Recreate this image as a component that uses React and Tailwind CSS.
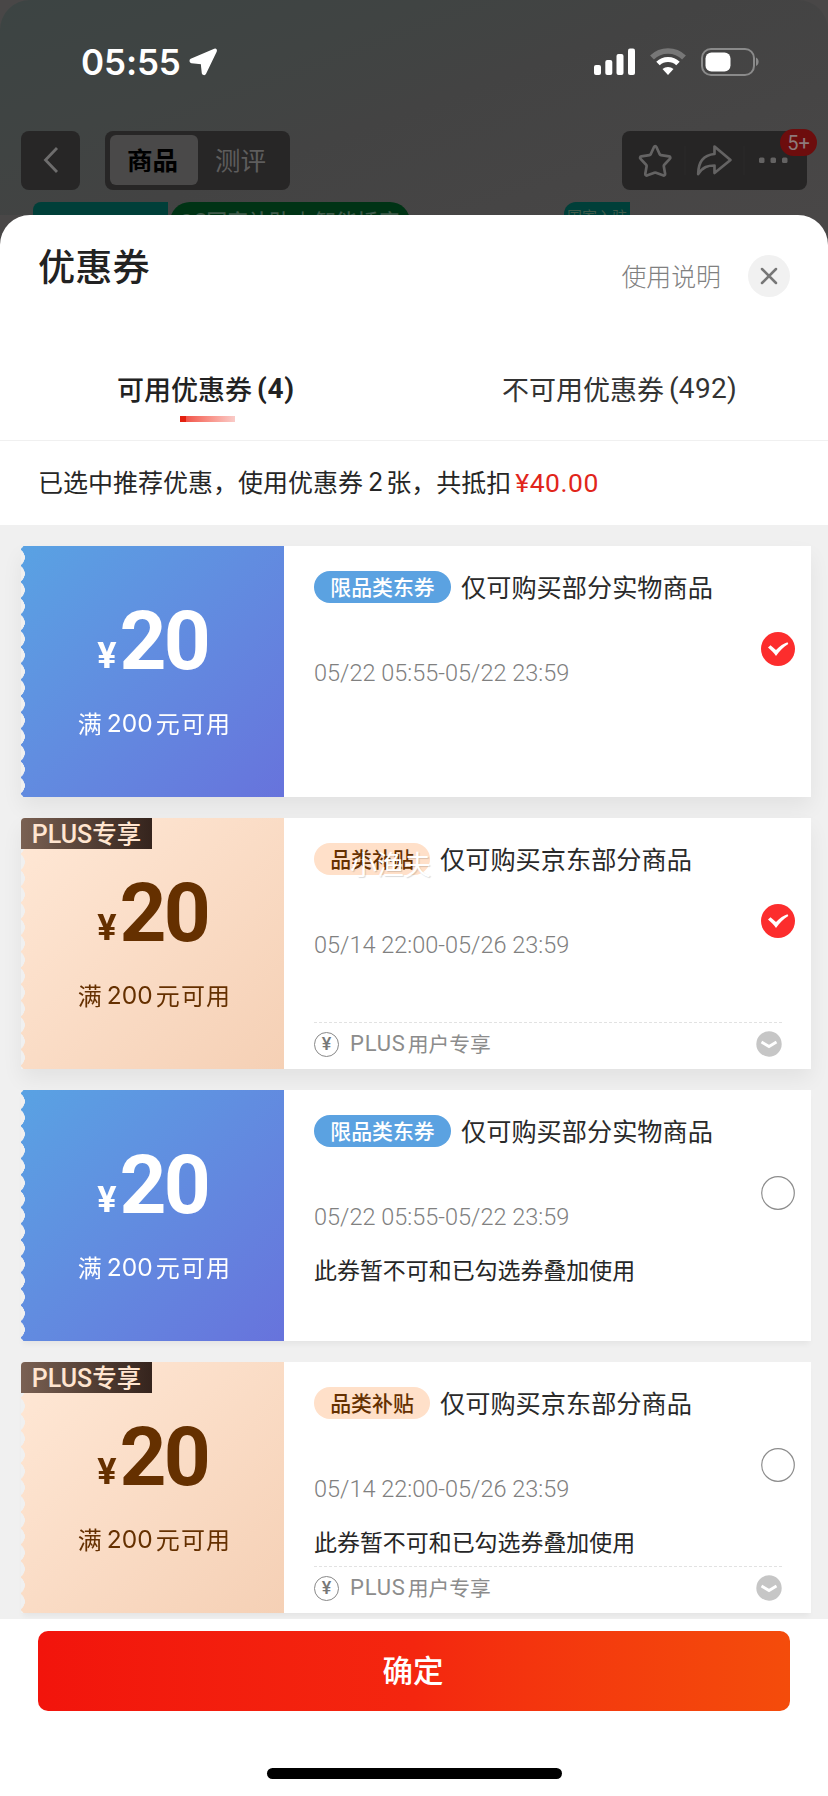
import React, { useState } from 'react';

const coupons = [
  {
    id: 1,
    type: 'dong',
    tag: '限品类东券',
    title: '仅可购买部分实物商品',
    date: '05/22 05:55-05/22 23:59',
    checked: true,
  },
  {
    id: 2,
    type: 'plus',
    tag: '品类补贴',
    title: '仅可购买京东部分商品',
    date: '05/14 22:00-05/26 23:59',
    checked: true,
    watermark: '小渔夫',
  },
  {
    id: 3,
    type: 'dong',
    tag: '限品类东券',
    title: '仅可购买部分实物商品',
    date: '05/22 05:55-05/22 23:59',
    checked: false,
    note: '此券暂不可和已勾选券叠加使用',
  },
  {
    id: 4,
    type: 'plus',
    tag: '品类补贴',
    title: '仅可购买京东部分商品',
    date: '05/14 22:00-05/26 23:59',
    checked: false,
    note: '此券暂不可和已勾选券叠加使用',
  },
];

const StatusBar = () => (
  <div className="flex h-[130px] items-start justify-between pl-[81px] pr-[69px] pt-[46px]">
    <div className="flex items-center">
      <span className="w-[105px] whitespace-nowrap font-['Inter'] text-[35px] font-semibold leading-8 tracking-[-0.100px] text-white">05:55</span>
      <svg width="30" height="30" viewBox="0 0 30 30" className="ml-[2px]">
        <path d="M26.500 2.500 3 12.500c-1.200.6-1 2.600.5 2.900l10 1 1 9.600c.3 1.600 2.200 1.900 2.900.5L28 4.500c.5-1.400-.1-2.500-1.500-2Z" fill="#fff" stroke="#fff" strokeWidth="1.500" strokeLinejoin="round" />
      </svg>
    </div>
    <div className="flex items-center pt-0.5">
      <svg width="42" height="28" viewBox="0 0 42 28" fill="#fff">
        <rect x="0" y="17" width="7" height="10" rx="2" />
        <rect x="11.300" y="12" width="7" height="15" rx="2" />
        <rect x="22.500" y="6" width="7" height="21" rx="2" />
        <rect x="34" y="0.500" width="7" height="26.500" rx="2" />
      </svg>
      <svg width="36" height="28" viewBox="0 0 36 28" className="ml-[14px]" fill="none">
        <path d="M2 9.500a23 23 0 0 1 32 0" stroke="#777" strokeWidth="5.500" />
        <path d="M8 15.500a14.500 14.500 0 0 1 20 0" stroke="#fff" strokeWidth="5" />
        <path d="M18 27l-5.500-6a8.500 8.500 0 0 1 11 0Z" fill="#fff" />
      </svg>
      <svg width="58" height="28" viewBox="0 0 58 28" className="ml-[15px]" fill="none">
        <rect x="1" y="1" width="52" height="26" rx="9" stroke="#8a8a8a" strokeWidth="2" />
        <rect x="4.500" y="4.500" width="25" height="19" rx="6" fill="#fff" />
        <path d="M55 9.500c3.500 1.500 3.500 7 0 8.500Z" fill="#8a8a8a" />
      </svg>
    </div>
  </div>
);

const NavBar = () => (
  <div className="flex h-[60px] items-center justify-between pl-[21px] pr-[21px]">
    <div className="flex">
      <button className="flex h-[59px] w-[59px] items-center justify-center rounded-lg bg-[#272626]">
        <svg width="18" height="28" viewBox="0 0 18 28" fill="none">
          <path d="M15 2 3.500 14l11.500 12" stroke="#6e6d6d" strokeWidth="2.800" />
        </svg>
      </button>
      <div className="ml-[25px] flex h-[59px] w-[185px] items-center rounded-lg bg-[#272626] px-[5px]">
        <span className="flex h-[50px] w-[88px] items-center justify-center rounded-md bg-[#4a4949] pb-[2px] pr-[3px] text-[25.500px] font-bold text-black">商品</span>
        <span className="flex flex-1 items-center justify-center pb-[2px] pr-[2px] text-[25.500px] text-[#5e5d5d]">测评</span>
      </div>
    </div>
    <div className="relative flex h-[59px] w-[185px] items-center rounded-lg bg-[#262525]">
      <svg width="185" height="59" viewBox="0 0 185 59" fill="none" stroke="#646363" strokeWidth="2.700" strokeLinejoin="round">
        <path d="M32 16c.6-1.300 1.800-1.300 2.400 0l3.300 7.300c.3.500.7.800 1.300.9l8 1.200c1.400.2 1.800 1.500.8 2.500l-5.500 5.800c-.4.400-.6 1-.5 1.500l1.300 7.500c.2 1.400-.9 2.200-2.200 1.600l-6.900-2.600c-.5-.2-1.100-.2-1.600 0l-6.900 2.600c-1.300.6-2.400-.2-2.200-1.600l1.300-7.500c.1-.5-.1-1.100-.5-1.500L18.600 27.900c-1-1-.6-2.300.8-2.500l8-1.200c.6-.1 1-.4 1.300-.9Z" />
        <path d="M92.500 15.500l16 13.500-16 13v-7.500c-6.500 0-11.500 1-16.300 8.500 0-12.500 5.800-19 16.300-20Z" />
        <path d="M63 15v29M122 15v29" stroke="#2b2a2a" strokeWidth="1" />
        <g fill="#646363" stroke="none">
          <rect x="137" y="26.500" width="5.500" height="5.500" rx="1.500" />
          <rect x="148.500" y="26.500" width="5.500" height="5.500" rx="1.500" />
          <rect x="160" y="26.500" width="5.500" height="5.500" rx="1.500" />
        </g>
      </svg>
      <span className="absolute -right-[10px] -top-[2px] flex h-[27px] w-[37px] items-center justify-center rounded-full bg-[#6d0d0d] pt-[2px] font-['Roboto'] text-[20px] text-[#8e7a7a]">5+</span>
    </div>
  </div>
);

const Banner = () => (
  <div className="flex h-[25px] items-start overflow-hidden pl-[33px] pt-3 text-[#3f5a4a]">
    <div className="h-10 w-[135px] rounded-tl-lg bg-[#003f39]"></div>
    <div className="ml-[2px] flex h-10 w-[240px] shrink-0 justify-center whitespace-pre rounded-t-[20px] bg-[#003315] pt-[4px] text-[21px] font-medium leading-7">3C国家补贴  |  智能插座</div>
    <div className="ml-[154px] h-10 w-[66px] whitespace-nowrap rounded-tl-xl bg-[#003f39] pt-[2px] text-center text-[15px] leading-6">国家入驻</div>
  </div>
);

const CheckMark = ({ checked, onClick }) => (
  <svg width="34" height="34" viewBox="0 0 34 34" fill="none" onClick={onClick} className="shrink-0 cursor-pointer">
    {checked ? (
      <>
        <circle cx="17" cy="17" r="17" fill="#fc2d2d" />
        <path d="M7 15.500l2.500-2.200 5.500 4.700c4-4 7.500-6.500 11.500-7.700l.8 1.700c-4.500 2.500-8.500 6.500-12.300 12-2-3-4.500-5.500-8-8.500Z" fill="#fff" />
      </>
    ) : (
      <circle cx="17" cy="17" r="16.300" stroke="#8c8c8c" strokeWidth="1.200" fill="#fff" />
    )}
  </svg>
);

const CouponAmount = ({ plus }) => (
  <div
    className={
      plus
        ? 'relative flex h-[251px] w-[263px] flex-col items-center bg-linear-to-br from-[#ffe8d6] to-[#f5d0b5] text-[#653000] [mask-image:radial-gradient(circle_9px_at_-5px_50%,transparent_96%,#000)] [mask-position:0_3.300px] [mask-repeat:repeat-y] [mask-size:100%_16.300px]'
        : 'relative flex h-[251px] w-[263px] flex-col items-center bg-linear-to-br from-[#59a2e3] to-[#6773dc] text-white [mask-image:radial-gradient(circle_9px_at_-5px_50%,transparent_96%,#000)] [mask-position:0_3.300px] [mask-repeat:repeat-y] [mask-size:100%_16.300px]'
    }
  >
    <div className="flex h-[142px] items-end font-['Roboto'] font-bold">
      <span className="mb-[8px] text-[36px] leading-[47px]">¥</span>
      <span className="ml-[3px] text-[82px] leading-[94px] tracking-[-3px]">20</span>
    </div>
    <div className="mt-[17px] ml-[4px] flex items-center text-[24px] leading-9 tracking-[1.200px]">
      <span>满</span>
      <span className="ml-[4px] mr-[3px] font-['Inter'] text-[24.500px] tracking-[0px]">200</span>
      <span>元可用</span>
    </div>
  </div>
);

const PlusRow = () => (
  <div className="mr-[29px] flex h-[47px] items-center justify-between border-t border-dashed border-[#e2e2e2] pb-[4px]">
    <div className="flex items-center">
      <span className="flex h-[25px] w-[25px] items-center justify-center rounded-full border border-[#888] font-['Roboto'] text-[18px] font-medium leading-none text-[#777]">¥</span>
      <span className="ml-[11px] pb-[1px] font-['Roboto'] text-[22px] leading-8 tracking-[0.800px] text-[#8c8c8c]">PLUS</span>
      <span className="ml-[2px] pb-[3px] text-[20.800px] leading-8 text-[#8c8c8c]">用户专享</span>
    </div>
    <svg width="26" height="26" viewBox="0 0 26 26" fill="none">
      <circle cx="13" cy="13" r="12.700" fill="#c6c6c6" />
      <path d="M5.500 11l7.500 4.500 7.500-4.500" stroke="#fff" strokeWidth="2.800" />
    </svg>
  </div>
);

const Coupon = ({ item, checked, onToggle }) => {
  const plus = item.type === 'plus';
  return (
    <div
      className={
        item.note
          ? 'relative flex h-[251px] w-[790px] shadow-[0_5px_6px_-2px_rgba(0,0,0,0.05)]'
          : 'relative flex h-[251px] w-[790px] shadow-[0_10px_20px_rgba(0,0,0,0.06)]'
      }
    >
      <CouponAmount plus={plus} />
      {plus && (
        <div className="absolute left-0 top-0 flex h-[31px] w-[131px] items-center justify-center rounded-tl-sm bg-linear-to-r from-[#7a6153] to-[#35241d] text-[24.500px] font-medium leading-none text-[#ffe5d0]">
          <span className="pt-[2px] font-['Roboto'] text-[25px] font-medium">PLUS</span>专享
        </div>
      )}
      <div className="relative flex flex-1 flex-col bg-white pl-[30px]">
        <div className="mt-[25px] flex h-[32px] items-center">
          <span
            className={
              plus
                ? 'flex h-[32px] w-[116px] items-center justify-center rounded-full bg-[#ffe0c9] pb-[1px] text-[20.900px] font-medium text-[#653000]'
                : 'flex h-[32px] w-[137px] items-center justify-center rounded-full bg-[#5ba2e1] pb-[1px] text-[20.900px] font-medium text-white'
            }
          >
            {item.tag}
          </span>
          <span className="ml-[10px] text-[25.200px] text-[#2a2a2a]">{item.title}</span>
        </div>
        <div className="mt-[54px] h-[32px] whitespace-nowrap font-['Roboto'] text-[23.500px] font-light leading-8 text-[#808080]">{item.date}</div>
        <div className="mt-[18px] h-[43px] text-[22.950px] leading-9 text-[#262626]">{item.note}</div>
        {plus && <PlusRow />}
        <div className="absolute right-[16px] top-[86px]">
          <CheckMark checked={checked} onClick={onToggle} />
        </div>
        {item.watermark && (
          <span className="absolute left-[66px] top-[26px] text-[27px] text-white [text-shadow:1px_1px_1px_rgba(0,0,0,0.15)]">{item.watermark}</span>
        )}
      </div>
    </div>
  );
};

const App = () => {
  const [selected, setSelected] = useState(coupons.filter((c) => c.checked).map((c) => c.id));

  const toggle = (id) => {
    setSelected(selected.includes(id) ? selected.filter((s) => s !== id) : [...selected, id]);
  };

  return (
    <div className="h-[1796px] w-[828px] overflow-hidden bg-[#494747] font-['Noto_Sans_CJK_SC',sans-serif]">
      <div className="h-[215px] rounded-t-[30px] bg-[linear-gradient(160deg,#3c4443_0%,#404443_30%,#434343_50%,#494747_100%)]">
        <StatusBar />
        <NavBar />
        <Banner />
      </div>

      <div className="flex h-[1581px] flex-col rounded-t-[30px] bg-white">
        <div className="flex h-[106px] items-start justify-between pl-[38px] pr-[38px]">
          <h1 className="pt-[24px] text-[37.200px] font-medium leading-[52px] text-[#222]">优惠券</h1>
          <div className="flex items-center pt-[40px]">
            <span className="pb-[1px] text-[24.900px] font-light leading-none text-[#808080]">使用说明</span>
            <button className="ml-[27px] flex h-[42px] w-[42px] items-center justify-center rounded-full bg-[#f1f1f1]">
              <svg width="18" height="18" viewBox="0 0 18 18">
                <path d="M2 2l14 14M16 2L2 16" stroke="#777" strokeWidth="2.500" strokeLinecap="round" />
              </svg>
            </button>
          </div>
        </div>

        <div className="grid h-[120px] grid-cols-2 border-b border-[#f0f0f0]">
          <div className="flex flex-col items-center pt-[49px]">
            <div className="flex pr-[2px] text-[27px] font-medium leading-[38px] text-[#222]">
              可用优惠券<span className="ml-[5px] font-['Roboto'] text-[28px] font-bold tracking-[0.700px]">(4)</span>
            </div>
            <div className="mt-[8px] flex h-[6px] w-[55px]">
              <i className="w-[6px] bg-[#e3200f]"></i>
              <i className="flex-1 bg-linear-to-r from-[#f0534a] to-[#f9cbc8]"></i>
            </div>
          </div>
          <div className="flex justify-center pr-[3px] pt-[49px] text-[27px] leading-[38px] text-[#333]">
            不可用优惠券<span className="ml-[5px] font-['Roboto'] text-[28px] font-normal tracking-[0.300px]">(492)</span>
          </div>
        </div>

        <div className="flex h-[84px] shrink-0 items-center pb-[2px] pl-[38px] text-[25px] text-[#262626]">
          已选中推荐优惠，使用优惠券<span className="ml-[5px] mr-[3px] pt-[2px] font-['Inter'] text-[25px]">{selected.length}</span>张，共抵扣
          <span className="ml-[4px] pt-[1px] font-['Roboto'] text-[26.500px] tracking-[0.500px] text-[#e1251b]">¥{selected.length * 20}.00</span>
        </div>

        <div className="h-[1094px] shrink-0 space-y-[21px] overflow-hidden bg-[#f0f0f0] pl-[21px] pt-[21px]">
          {coupons.map((item) => (
            <Coupon key={item.id} item={item} checked={selected.includes(item.id)} onToggle={() => toggle(item.id)} />
          ))}
        </div>

        <div className="flex flex-1 flex-col items-center bg-white pt-[12px]">
          <button className="h-[80px] w-[752px] rounded-[10px] bg-linear-to-r from-[#f2140c] via-[#f4260f] to-[#f44c0b] pb-[2px] pr-[2px] text-[30.500px] font-medium text-white">
            确定
          </button>
          <div className="mt-[57px] h-[11px] w-[295px] rounded-full bg-black"></div>
        </div>
      </div>
    </div>
  );
};

export default App;
